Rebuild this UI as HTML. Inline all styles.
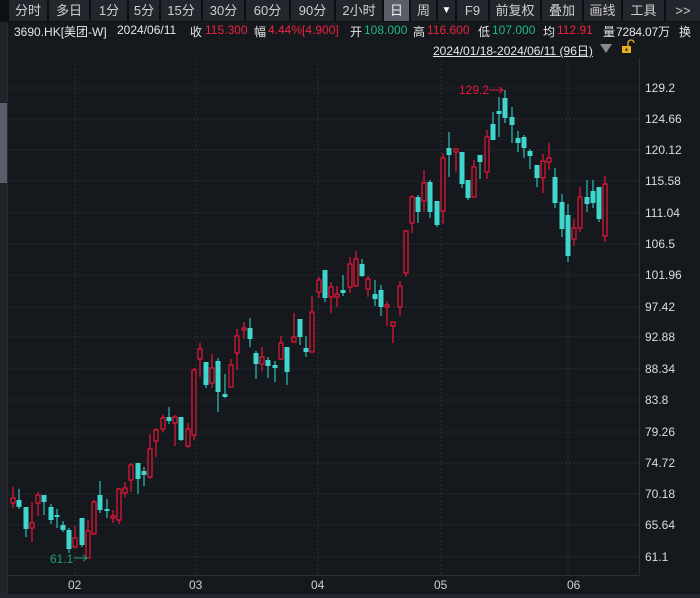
<!DOCTYPE html>
<html><head><meta charset="utf-8"><style>
*{margin:0;padding:0;box-sizing:border-box}
body{width:700px;height:598px;background:#15181d;overflow:hidden;position:relative;font-family:"Liberation Sans","Noto Sans CJK SC",sans-serif;color:#d0d0d0}
.tb{position:absolute;left:0;top:0;width:700px;height:22px;background:#0e1013}
.tb div{position:absolute;top:0;height:21px;background:#23262d;font-size:13px;line-height:21px;text-align:center;color:#cfcfcf}
.info span{position:absolute;top:23px;font-size:12px;white-space:nowrap;color:#e6e6e6}
.info .r{color:#f0213f}.info .g{color:#1fb58a}
.pl{position:absolute;left:645px;font-size:12px;color:#dcdcdc}
.xl{position:absolute;top:578px;font-size:12px;color:#cfcfcf}
</style></head><body>
<div class="tb">
<div style="left:9px;width:38px">分时</div>
<div style="left:49px;width:40px">多日</div>
<div style="left:91px;width:36px">1分</div>
<div style="left:129px;width:30px">5分</div>
<div style="left:161px;width:40px">15分</div>
<div style="left:203px;width:41px">30分</div>
<div style="left:246px;width:43px">60分</div>
<div style="left:291px;width:43px">90分</div>
<div style="left:336px;width:46px">2小时</div>
<div style="left:384px;width:25px;background:#5b5e69;color:#eee">日</div>
<div style="left:411px;width:25px">周</div>
<div style="left:438px;width:17px;font-size:10px;color:#fff">▼</div>
<div style="left:457px;width:31px">F9</div>
<div style="left:490px;width:50px">前复权</div>
<div style="left:542px;width:40px">叠加</div>
<div style="left:584px;width:37px">画线</div>
<div style="left:623px;width:41px">工具</div>
<div style="left:666px;width:34px">&gt;&gt;</div>
</div>
<div class="info">
<span style="left:14px">3690.HK[美团-W]</span>
<span style="left:117px">2024/06/11</span>
<span style="left:190px">收</span><span class="r" style="left:205px">115.300</span>
<span style="left:254px">幅</span><span class="r" style="left:268px">4.44%[4.900]</span>
<span style="left:350px">开</span><span class="g" style="left:364px">108.000</span>
<span style="left:413px">高</span><span class="r" style="left:427px">116.600</span>
<span style="left:478px">低</span><span class="g" style="left:492px">107.000</span>
<span style="left:543px">均</span><span class="r" style="left:557px">112.91</span>
<span style="left:603px">量</span><span style="left:616px;letter-spacing:-0.2px">7284.07万</span>
<span style="left:679px">换</span>
</div>
<div style="position:absolute;top:42px;left:433px;font-size:12px;color:#e6e6e6;text-decoration:underline">2024/01/18-2024/06/11 (96日)</div>
<svg style="position:absolute;left:0;top:0" width="700" height="598">
<polygon points="600,44 612,44 606,53" fill="#8a8a8a"/>
<rect x="622" y="46" width="9" height="7" fill="#e8b21e"/>
<path d="M628,46 v-3 a3,3 0 0 1 6,0" fill="none" stroke="#e8b21e" stroke-width="1.3"/>
<rect x="625.5" y="48.5" width="2" height="2.5" fill="#3a2a00"/>
<rect x="0" y="22" width="7" height="576" fill="#1f2228"/>
<rect x="0" y="103" width="7" height="80" fill="#5b5d69"/>
<line x1="7.5" y1="22" x2="7.5" y2="598" stroke="#2a2d33"/>
<g stroke="#2b2e34" stroke-dasharray="2,2">
<path d="M9,88H639M9,119H639M9,150H639M9,181H639M9,213H639M9,244H639M9,275H639M9,307H639M9,337H639M9,369H639M9,400H639M9,432H639M9,463H639M9,494H639M9,525H639M9,557H639"/>
<path d="M75,60V575M196,60V575M318,60V575M441,60V575M568,60V575"/>
</g>
<path d="M9,575.5H639.5M639.5,58V575" stroke="#2e3137" fill="none"/>
<rect x="0" y="594" width="700" height="4" fill="#23262d"/>
<g stroke="#e8173a" stroke-width="1.2" fill="none">
<path d="M13,487V508M32,502V542M38,492V516M75,526V548M88,520V558M94,500V535M113,510V523M119,488V524M125,482V497M131,463V492M150,434V479M156,428V457M163,415V432M175,415V446M188,423V448M194,368V440M200,343V377M212,354V388M231,359V387M237,329V370M244,322V339M262,347V371M281,336V360M294,313V343M312,296V352M319,277V298M331,282V313M337,286V307M350,257V293M356,251V287M368,276V297M387,301V326M393,322V343M400,281V316M406,230V277M412,195V233M424,170V212M443,153V224M456,148V172M474,160V197M487,130V179M543,154V193M549,143V170M574,219V246M580,187V232M605,176V242"/>
</g>
<g stroke="#e8173a" stroke-width="1.2" fill="#15181d">
<rect x="11" y="498" width="4" height="5"/><rect x="30" y="523" width="4" height="5"/><rect x="36" y="495" width="4" height="8"/><rect x="73" y="538" width="4" height="9"/><rect x="86" y="531" width="4" height="27"/><rect x="92" y="502" width="4" height="32"/><rect x="111" y="516" width="4" height="2"/><rect x="117" y="489" width="4" height="31"/><rect x="123" y="488" width="4" height="5"/><rect x="129" y="465" width="4" height="15"/><rect x="148" y="449" width="4" height="28"/><rect x="154" y="430" width="4" height="11"/><rect x="161" y="418" width="4" height="11"/><rect x="173" y="417" width="4" height="6"/><rect x="186" y="429" width="4" height="17"/><rect x="192" y="370" width="4" height="65"/><rect x="198" y="349" width="4" height="10"/><rect x="210" y="368" width="4" height="15"/><rect x="229" y="365" width="4" height="22"/><rect x="235" y="336" width="4" height="17"/><rect x="242" y="328" width="4" height="2"/><rect x="260" y="357" width="4" height="7"/><rect x="279" y="343" width="4" height="16"/><rect x="292" y="337" width="4" height="5"/><rect x="310" y="312" width="4" height="40"/><rect x="317" y="280" width="4" height="12"/><rect x="329" y="287" width="4" height="10"/><rect x="335" y="294" width="4" height="3"/><rect x="348" y="264" width="4" height="23"/><rect x="354" y="259" width="4" height="27"/><rect x="366" y="279" width="4" height="10"/><rect x="385" y="305" width="4" height="2"/><rect x="391" y="322" width="4" height="4"/><rect x="398" y="286" width="4" height="21"/><rect x="404" y="231" width="4" height="42"/><rect x="410" y="197" width="4" height="26"/><rect x="422" y="183" width="4" height="18"/><rect x="441" y="158" width="4" height="53"/><rect x="454" y="149" width="4" height="3"/><rect x="472" y="167" width="4" height="30"/><rect x="485" y="137" width="4" height="35"/><rect x="541" y="161" width="4" height="17"/><rect x="547" y="158" width="4" height="4"/><rect x="572" y="228" width="4" height="11"/><rect x="578" y="197" width="4" height="31"/><rect x="603" y="184" width="4" height="52"/>
</g>
<g stroke="#2fbfb8" stroke-width="1.2" fill="none">
<path d="M19,489V509M26,507V537M44,495V515M51,504V524M57,509V528M63,521V532M69,528V553M82,518V547M100,481V513M107,499V518M138,463V494M144,467V486M169,407V424M181,417V441M206,362V388M218,358V412M225,374V398M250,318V347M256,351V379M268,357V378M275,361V382M287,347V385M300,319V345M306,336V357M325,270V302M343,275V296M362,259V277M375,280V306M381,285V316M418,195V223M430,180V218M437,201V227M449,132V177M462,152V188M468,180V200M480,155V179M493,112V140M499,97V137M505,90V123M512,107V143M518,131V152M524,135V158M530,149V169M537,165V187M555,168V208M562,194V237M568,204V262M587,180V212M593,180V208M599,187V222"/>
</g>
<g fill="#3fd6cd">
<rect x="16.5" y="500" width="5" height="7"/><rect x="23.5" y="507" width="5" height="22"/><rect x="41.5" y="495" width="5" height="7"/><rect x="48.5" y="507" width="5" height="13"/><rect x="54.5" y="515" width="5" height="2"/><rect x="60.5" y="525" width="5" height="5"/><rect x="66.5" y="530" width="5" height="19"/><rect x="79.5" y="518" width="5" height="27"/><rect x="97.5" y="495" width="5" height="15"/><rect x="104.5" y="509" width="5" height="2"/><rect x="135.5" y="463" width="5" height="16"/><rect x="141.5" y="471" width="5" height="4"/><rect x="166.5" y="417" width="5" height="4"/><rect x="178.5" y="417" width="5" height="23"/><rect x="203.5" y="362" width="5" height="23"/><rect x="215.5" y="361" width="5" height="31"/><rect x="222.5" y="394" width="5" height="3"/><rect x="247.5" y="328" width="5" height="11"/><rect x="253.5" y="353" width="5" height="11"/><rect x="265.5" y="360" width="5" height="6"/><rect x="272.5" y="365" width="5" height="3"/><rect x="284.5" y="347" width="5" height="25"/><rect x="297.5" y="319" width="5" height="18"/><rect x="303.5" y="348" width="5" height="4"/><rect x="322.5" y="270" width="5" height="28"/><rect x="340.5" y="290" width="5" height="3"/><rect x="359.5" y="264" width="5" height="12"/><rect x="372.5" y="294" width="5" height="5"/><rect x="378.5" y="290" width="5" height="17"/><rect x="415.5" y="197" width="5" height="15"/><rect x="427.5" y="182" width="5" height="30"/><rect x="434.5" y="201" width="5" height="24"/><rect x="446.5" y="148" width="5" height="7"/><rect x="459.5" y="152" width="5" height="32"/><rect x="465.5" y="180" width="5" height="18"/><rect x="477.5" y="155" width="5" height="7"/><rect x="490.5" y="124" width="5" height="16"/><rect x="496.5" y="111" width="5" height="3"/><rect x="502.5" y="98" width="5" height="20"/><rect x="509.5" y="117" width="5" height="8"/><rect x="515.5" y="138" width="5" height="5"/><rect x="521.5" y="137" width="5" height="11"/><rect x="527.5" y="151" width="5" height="5"/><rect x="534.5" y="165" width="5" height="13"/><rect x="552.5" y="177" width="5" height="26"/><rect x="559.5" y="202" width="5" height="27"/><rect x="565.5" y="215" width="5" height="41"/><rect x="584.5" y="197" width="5" height="7"/><rect x="590.5" y="191" width="5" height="12"/><rect x="596.5" y="187" width="5" height="32"/>
</g>
<text x="459" y="94" font-size="12" fill="#e8173a" font-family="Liberation Sans">129.2</text>
<path d="M489,90H503M499,87l4,3l-4,3" stroke="#e8173a" fill="none"/>
<text x="50" y="563" font-size="12" fill="#1f9e72" font-family="Liberation Sans">61.1</text>
<path d="M74,558H87M83,555l4,3l-4,3" stroke="#1f9e72" fill="none"/>
</svg>
<div class="pl" style="top:81px">129.2</div>
<div class="pl" style="top:112px">124.66</div>
<div class="pl" style="top:143px">120.12</div>
<div class="pl" style="top:174px">115.58</div>
<div class="pl" style="top:206px">111.04</div>
<div class="pl" style="top:237px">106.5</div>
<div class="pl" style="top:268px">101.96</div>
<div class="pl" style="top:300px">97.42</div>
<div class="pl" style="top:330px">92.88</div>
<div class="pl" style="top:362px">88.34</div>
<div class="pl" style="top:393px">83.8</div>
<div class="pl" style="top:425px">79.26</div>
<div class="pl" style="top:456px">74.72</div>
<div class="pl" style="top:487px">70.18</div>
<div class="pl" style="top:518px">65.64</div>
<div class="pl" style="top:550px">61.1</div>
<div class="xl" style="left:68px">02</div>
<div class="xl" style="left:189px">03</div>
<div class="xl" style="left:311px">04</div>
<div class="xl" style="left:434px">05</div>
<div class="xl" style="left:567px">06</div>
</body></html>
